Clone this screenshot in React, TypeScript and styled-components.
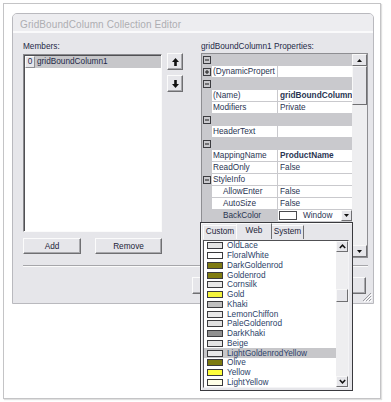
import React from 'react';
import styled, { createGlobalStyle } from 'styled-components';

const FONT = `"Liberation Sans", Arial, sans-serif`;

const GlobalStyle = createGlobalStyle`
  html, body { margin: 0; padding: 0; background: #ffffff; }
  body { font-family: ${FONT}; }
  * { box-sizing: border-box; }
`;

const Page = styled.div`
  width: 391px;
  height: 402px;
  padding: 3px 0 0 3px;
  background: #ffffff;
  overflow: hidden;
`;

const Frame = styled.div`
  width: 378px;
  height: 396px;
  border: 1px solid #c4c4c6;
  box-shadow: 1px 1px 1px rgba(0, 0, 0, 0.12);
  padding: 9px 0 0 8px;
  background: #ffffff;
`;

const Dialog = styled.div`
  position: relative;
  width: 362px;
  height: 291px;
  border: 1px solid #b9b9be;
  border-radius: 5px 5px 0 0;
  background: #e6e6ea;
  display: flex;
  flex-direction: column;
`;

const TitleBar = styled.div`
  height: 19px;
  flex: none;
  border-bottom: 2px solid #fafafb;
  background: #ededf0;
  border-radius: 4px 4px 0 0;
  padding: 4px 0 0 7px;
  display: flex;
  align-items: center;
  font-size: 10px;
  color: #adadb2;
  letter-spacing: 0.1px;
  white-space: nowrap;
`;

const Body = styled.div`
  flex: 1;
  padding: 9px 5px 0 10px;
  display: flex;
  flex-direction: column;
`;

const TopSection = styled.div`
  display: grid;
  grid-template-columns: 139px 1fr 167px;
  height: 216px;
`;

const Column = styled.div`
  display: flex;
  flex-direction: column;
`;

const Label = styled.div<{ $h: number }>`
  height: ${(p) => p.$h}px;
  font-size: 8.25px;
  line-height: 10px;
  color: #1f2a48;
  white-space: nowrap;
`;

const MembersList = styled.div`
  height: 178px;
  background: #ffffff;
  border: 1px solid;
  border-color: #8a8a8e #fbfbfb #fbfbfb #8a8a8e;
  box-shadow: inset 1px 1px 0 #505054;
  padding: 1px 0 0 1px;
`;

const MemberRow = styled.div`
  height: 12px;
  display: flex;
`;

const IndexCell = styled.div`
  width: 10px;
  flex: none;
  border: 1px solid;
  border-color: #fbfbfb #8e8e92 #8e8e92 #fbfbfb;
  background: #e6e6ea;
  font-size: 8.25px;
  line-height: 10px;
  text-align: center;
  color: #1f2a48;
`;

const MemberName = styled.div<{ $selected?: boolean }>`
  flex: 1;
  background: ${(p) => (p.$selected ? '#c7c7ca' : 'transparent')};
  padding-left: 2px;
  font-size: 8.25px;
  line-height: 12px;
  color: #1f2a48;
  white-space: nowrap;
`;

const ButtonRow = styled.div<{ $gap: number; $end?: boolean }>`
  display: flex;
  gap: ${(p) => p.$gap}px;
  justify-content: ${(p) => (p.$end ? 'flex-end' : 'flex-start')};
`;

const Button = styled.button<{ $w: number; $h: number }>`
  width: ${(p) => p.$w}px;
  height: ${(p) => p.$h}px;
  padding: 0;
  margin: 0;
  font-family: ${FONT};
  font-size: 8.25px;
  color: #1d2438;
  background: #e6e6ea;
  border: 1px solid;
  border-color: #fbfbfb #6f6f72 #6f6f72 #fbfbfb;
  box-shadow: inset -1px -1px 0 #a8a8ac;
  display: flex;
  align-items: center;
  justify-content: center;
`;

const MidColumn = styled.div`
  padding: 11px 0 0 5px;
  display: flex;
  flex-direction: column;
  gap: 5px;
`;

const PropGrid = styled.div`
  height: 205px;
  border: 1px solid #8e8e92;
  background: #ffffff;
  display: flex;
  overflow: hidden;
`;

const GridBody = styled.div`
  width: 150px;
  flex: none;
  display: flex;
  flex-direction: column;
  overflow: hidden;
`;

const CatRow = styled.div`
  height: 12px;
  flex: none;
  background: #c9c9cd;
  display: flex;
  align-items: center;
  padding-left: 1px;
`;

const PropRow = styled.div`
  height: 12px;
  flex: none;
  display: flex;
`;

const MarginCell = styled.div`
  width: 10px;
  flex: none;
  background: #c9c9cd;
  display: flex;
  align-items: center;
  padding-left: 1px;
`;

const NameCell = styled.div<{ $indent?: boolean; $selected?: boolean }>`
  width: 66px;
  flex: none;
  border-right: 1px solid #c9c9cd;
  border-bottom: 1px solid #c9c9cd;
  background: ${(p) => (p.$selected ? '#c9c9cd' : '#ffffff')};
  padding-left: ${(p) => (p.$indent ? 11 : 1)}px;
  font-size: 8.25px;
  line-height: 11px;
  color: #2a3552;
  white-space: nowrap;
  overflow: hidden;
`;

const ValueCell = styled.div<{ $bold?: boolean }>`
  flex: 1;
  min-width: 0;
  border-bottom: 1px solid #c9c9cd;
  background: #ffffff;
  padding-left: 2px;
  font-size: 8.25px;
  line-height: 11px;
  font-weight: ${(p) => (p.$bold ? 700 : 400)};
  color: #2a3552;
  white-space: nowrap;
  overflow: hidden;
  display: flex;
  align-items: center;
`;

const ValueSwatch = styled.div`
  width: 18px;
  height: 9px;
  flex: none;
  border: 1px solid #4a4a4e;
  background: #ffffff;
  margin: 0 6px 0 -1px;
`;

const ValueText = styled.span`
  flex: 1;
`;

const DropButton = styled.div`
  width: 11px;
  height: 11px;
  flex: none;
  background: #e6e6ea;
  border: 1px solid;
  border-color: #fbfbfb #6f6f72 #6f6f72 #fbfbfb;
  display: flex;
  align-items: center;
  justify-content: center;
`;

const VScroll = styled.div<{ $w: number }>`
  width: ${(p) => p.$w}px;
  flex: none;
  display: flex;
  flex-direction: column;
  background: #eeeef0;
`;

const ScrollButton = styled.div<{ $h: number }>`
  height: ${(p) => p.$h}px;
  flex: none;
  background: #e6e6ea;
  border: 1px solid;
  border-color: #f8f8f8 #6f6f72 #6f6f72 #f8f8f8;
  display: flex;
  align-items: center;
  justify-content: center;
`;

const ScrollGap = styled.div<{ $h?: number }>`
  height: ${(p) => (p.$h ? `${p.$h}px` : 'auto')};
  flex: ${(p) => (p.$h ? 'none' : '1')};
`;

const Separator = styled.div`
  height: 2px;
  margin-top: 7px;
  border-top: 1px solid #a6a6aa;
  border-bottom: 1px solid #fbfbfb;
`;

const BottomRow = styled(ButtonRow)`
  margin-top: 10px;
  padding-right: 2px;
`;

const Grip = styled.svg`
  position: absolute;
  right: 1px;
  bottom: 1px;
`;

const Popup = styled.div`
  position: absolute;
  left: 187px;
  top: 208px;
  width: 153px;
  height: 169px;
  border: 1px solid #3a3a3e;
  background: #e6e6ea;
  box-shadow: inset 1px 1px 0 #fbfbfb;
  padding: 0 3px 2px 2px;
  display: flex;
  flex-direction: column;
  z-index: 2;
`;

const TabStrip = styled.div`
  height: 16px;
  flex: none;
  display: flex;
  align-items: flex-end;
`;

const Tab = styled.div<{ $w: number; $active?: boolean }>`
  width: ${(p) => p.$w}px;
  height: ${(p) => (p.$active ? 16 : 14)}px;
  border: 1px solid;
  border-bottom: none;
  border-color: #fbfbfb #6f6f72 transparent #fbfbfb;
  background: #e6e6ea;
  font-size: 8.25px;
  line-height: ${(p) => (p.$active ? 14 : 12)}px;
  color: #1d2438;
  text-align: center;
  position: relative;
  z-index: ${(p) => (p.$active ? 1 : 0)};
  margin: ${(p) => (p.$active ? '0 -1px 0 -1px' : '0')};
  white-space: nowrap;
`;

const ColorList = styled.div`
  margin-top: 1px;
  height: 148px;
  border: 1px solid;
  border-color: #505054 #f4f4f6 #f4f4f6 #505054;
  background: #ffffff;
  display: flex;
  overflow: hidden;
`;

const ColorItems = styled.div`
  flex: 1;
  overflow: hidden;
`;

const ColorItem = styled.div<{ $selected?: boolean }>`
  height: 9.75px;
  display: flex;
  align-items: center;
  padding-left: 3px;
  overflow: hidden;
  background: ${(p) => (p.$selected ? '#c7c7ca' : 'transparent')};
`;

const ColorSwatch = styled.div<{ $c: string }>`
  width: 16px;
  height: 7px;
  flex: none;
  border: 1px solid #3a3a3e;
  background: ${(p) => p.$c};
  margin-right: 4px;
`;

const ColorName = styled.span`
  font-size: 8.25px;
  line-height: 9px;
  color: #2d3f68;
  white-space: nowrap;
`;

const ScrollThumb = styled.div<{ $h: number }>`
  height: ${(p) => p.$h}px;
  flex: none;
  background: #e6e6ea;
  border: 1px solid;
  border-color: #f8f8f8 #6f6f72 #6f6f72 #f8f8f8;
`;

const Glyph = ({ plus }: { plus?: boolean }) => (
  <svg width="8" height="8" viewBox="0 0 8 8">
    <rect x="0.5" y="0.5" width="7" height="7" fill="none" stroke="#3c3c40" />
    <line x1="2" y1="4" x2="6" y2="4" stroke="#1a1a1a" />
    {plus && <line x1="4" y1="2" x2="4" y2="6" stroke="#1a1a1a" />}
  </svg>
);

const Triangle = ({ up }: { up?: boolean }) => (
  <svg width="5" height="3" viewBox="0 0 5 3">
    <path d={up ? 'M0 3 L2.5 0 L5 3 Z' : 'M0 0 L5 0 L2.5 3 Z'} fill="#111" />
  </svg>
);

const Chevron = ({ up }: { up?: boolean }) => (
  <svg width="7" height="5" viewBox="0 0 7 5">
    <polyline
      points={up ? '0.8,4 3.5,1.2 6.2,4' : '0.8,1 3.5,3.8 6.2,1'}
      fill="none"
      stroke="#111"
      strokeWidth="1.5"
    />
  </svg>
);

const MoveArrow = ({ up }: { up?: boolean }) => (
  <svg width="7" height="8" viewBox="0 0 7 8">
    <path
      d={up ? 'M3.5 0 L7 4 H4.8 V8 H2.2 V4 H0 Z' : 'M3.5 8 L7 4 H4.8 V0 H2.2 V4 H0 Z'}
      fill="#111"
    />
  </svg>
);

type Row =
  | { kind: 'cat' }
  | {
      kind: 'prop';
      name: string;
      value?: string;
      bold?: boolean;
      glyph?: 'plus' | 'minus';
      indent?: boolean;
      selected?: boolean;
      color?: boolean;
    };

const rows: Row[] = [
  { kind: 'cat' },
  { kind: 'prop', name: '(DynamicPropert', glyph: 'plus' },
  { kind: 'cat' },
  { kind: 'prop', name: '(Name)', value: 'gridBoundColumn', bold: true },
  { kind: 'prop', name: 'Modifiers', value: 'Private' },
  { kind: 'cat' },
  { kind: 'prop', name: 'HeaderText', value: '' },
  { kind: 'cat' },
  { kind: 'prop', name: 'MappingName', value: 'ProductName', bold: true },
  { kind: 'prop', name: 'ReadOnly', value: 'False' },
  { kind: 'prop', name: 'StyleInfo', glyph: 'minus' },
  { kind: 'prop', name: 'AllowEnter', value: 'False', indent: true },
  { kind: 'prop', name: 'AutoSize', value: 'False', indent: true },
  { kind: 'prop', name: 'BackColor', value: 'Window', indent: true, selected: true, color: true },
  { kind: 'prop', name: '', value: '', indent: true },
  { kind: 'prop', name: '', value: '', indent: true },
  { kind: 'prop', name: '', value: '', indent: true },
];

const colors: { name: string; c: string; selected?: boolean }[] = [
  { name: 'OldLace', c: '#e4e4e4' },
  { name: 'FloralWhite', c: '#ffffff' },
  { name: 'DarkGoldenrod', c: '#7e7a12' },
  { name: 'Goldenrod', c: '#807c10' },
  { name: 'Cornsilk', c: '#e8e8e8' },
  { name: 'Gold', c: '#f4f43c' },
  { name: 'Khaki', c: '#c0c0c0' },
  { name: 'LemonChiffon', c: '#e8e8e8' },
  { name: 'PaleGoldenrod', c: '#e0e0e0' },
  { name: 'DarkKhaki', c: '#909090' },
  { name: 'Beige', c: '#e4e4e4' },
  { name: 'LightGoldenrodYellow', c: '#e8e8e8', selected: true },
  { name: 'Olive', c: '#7c7a10' },
  { name: 'Yellow', c: '#ffff3c' },
  { name: 'LightYellow', c: '#ffffe8' },
];

export default function App() {
  return (
    <>
      <GlobalStyle />
      <Page>
        <Frame>
          <Dialog>
            <TitleBar>GridBoundColumn Collection Editor</TitleBar>
            <Body>
              <TopSection>
                <Column>
                  <Label $h={12}>Members:</Label>
                  <MembersList>
                    <MemberRow>
                      <IndexCell>0</IndexCell>
                      <MemberName $selected>gridBoundColumn1</MemberName>
                    </MemberRow>
                  </MembersList>
                  <ButtonRow $gap={14} style={{ marginTop: 6 }}>
                    <Button $w={58} $h={16}>Add</Button>
                    <Button $w={67} $h={16}>Remove</Button>
                  </ButtonRow>
                </Column>
                <MidColumn>
                  <Button $w={16} $h={17} aria-label="Move up">
                    <MoveArrow up />
                  </Button>
                  <Button $w={16} $h={17} aria-label="Move down">
                    <MoveArrow />
                  </Button>
                </MidColumn>
                <Column>
                  <Label $h={11}>gridBoundColumn1 Properties:</Label>
                  <PropGrid>
                    <GridBody>
                      {rows.map((r, i) =>
                        r.kind === 'cat' ? (
                          <CatRow key={i}>
                            <Glyph />
                          </CatRow>
                        ) : (
                          <PropRow key={i}>
                            <MarginCell>
                              {r.glyph && <Glyph plus={r.glyph === 'plus'} />}
                            </MarginCell>
                            <NameCell $indent={r.indent} $selected={r.selected}>
                              {r.name}
                            </NameCell>
                            <ValueCell $bold={r.bold}>
                              {r.color ? (
                                <>
                                  <ValueSwatch />
                                  <ValueText>{r.value}</ValueText>
                                  <DropButton>
                                    <Triangle />
                                  </DropButton>
                                </>
                              ) : (
                                r.value
                              )}
                            </ValueCell>
                          </PropRow>
                        )
                      )}
                    </GridBody>
                    <VScroll $w={15}>
                      <ScrollButton $h={12}>
                        <Triangle up />
                      </ScrollButton>
                      <ScrollThumb $h={39} />
                      <ScrollGap />
                      <ScrollButton $h={12}>
                        <Triangle />
                      </ScrollButton>
                    </VScroll>
                  </PropGrid>
                </Column>
              </TopSection>
              <Separator />
              <BottomRow $gap={12} $end>
                <Button $w={80} $h={17} aria-label="OK" />
                <Button $w={82} $h={17}>Cancel</Button>
              </BottomRow>
            </Body>
            <Grip width="10" height="10" viewBox="0 0 10 10">
              <path d="M9 1 L1 9 M9 4 L4 9 M9 7 L7 9" stroke="#9a9aa0" strokeWidth="1" />
              <path d="M10 2 L2 10 M10 5 L5 10 M10 8 L8 10" stroke="#ffffff" strokeWidth="1" />
            </Grip>
            <Popup>
              <TabStrip>
                <Tab $w={34}>Custom</Tab>
                <Tab $w={36} $active>Web</Tab>
                <Tab $w={33}>System</Tab>
              </TabStrip>
              <ColorList>
                <ColorItems>
                  {colors.map((c) => (
                    <ColorItem key={c.name} $selected={c.selected}>
                      <ColorSwatch $c={c.c} />
                      <ColorName>{c.name}</ColorName>
                    </ColorItem>
                  ))}
                </ColorItems>
                <VScroll $w={12}>
                  <ScrollButton $h={11}>
                    <Chevron up />
                  </ScrollButton>
                  <ScrollGap $h={37} />
                  <ScrollThumb $h={13} />
                  <ScrollGap />
                  <ScrollButton $h={11}>
                    <Chevron />
                  </ScrollButton>
                </VScroll>
              </ColorList>
            </Popup>
          </Dialog>
        </Frame>
      </Page>
    </>
  );
}
